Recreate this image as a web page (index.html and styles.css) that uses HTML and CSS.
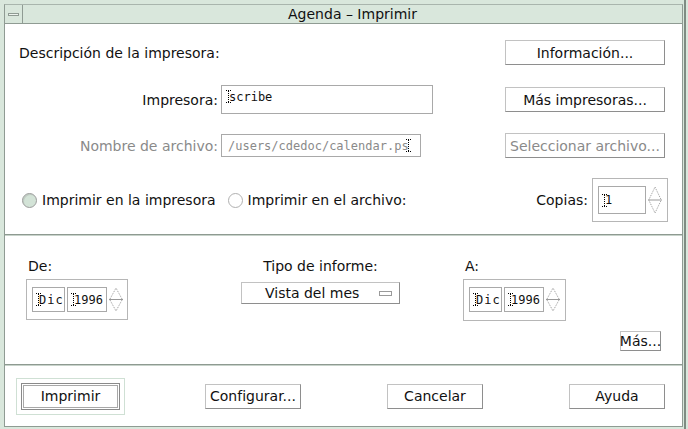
FILE: index.html
```html
<!DOCTYPE html>
<html lang="es">
<head>
<meta charset="utf-8">
<title>Agenda – Imprimir</title>
<link rel="stylesheet" href="styles.css">
</head>
<body>
<div class="window">
  <div class="titlebar">
    <div class="menu-btn"><span class="menu-dash"></span></div>
    <div class="title">Agenda – Imprimir</div>
  </div>
  <div class="client">
    <div class="sec sec-printer">
      <div class="row row-desc">
        <span class="desc">Descripción de la impresora:</span>
        <div class="btn btn-wide">Información...</div>
      </div>
      <div class="row row-printer">
        <span class="lbl">Impresora:</span>
        <div class="field field-printer"><svg class="ibeam" width="5" height="13" viewBox="0 0 5 13"><path d="M0 0.5h5M0 12.5h5M2.5 1v11" stroke="#000" stroke-dasharray="1 1" fill="none"/></svg>scribe</div>
        <div class="btn btn-wide">Más impresoras...</div>
      </div>
      <div class="row row-file">
        <span class="lbl disabled">Nombre de archivo:</span>
        <div class="field field-file disabled">/users/cdedoc/calendar.ps<svg class="ibeam ibeam-end" width="5" height="13" viewBox="0 0 5 13"><path d="M0 0.5h5M0 12.5h5M2.5 1v11" stroke="#000" stroke-dasharray="1 1" fill="none"/></svg></div>
        <div class="btn btn-wide disabled">Seleccionar archivo...</div>
      </div>
      <div class="row row-dest">
        <span class="radio on"></span><span class="radio-lbl">Imprimir en la impresora</span>
        <span class="radio second"></span><span class="radio-lbl">Imprimir en el archivo:</span>
        <span class="copias">Copias:</span>
        <div class="spin spin-copies">
          <div class="field field-copies"><svg class="ibeam" width="5" height="13" viewBox="0 0 5 13"><path d="M0 0.5h5M0 12.5h5M2.5 1v11" stroke="#000" stroke-dasharray="1 1" fill="none"/></svg>1</div>
          <svg class="arrows" width="14" height="28" viewBox="0 0 14 28"><path d="M1 13.5L7 1L13 13.5M1 14.5L7 27L13 14.5" stroke="#9a9a9a" stroke-dasharray="1 1" fill="none"/><path d="M0 14h14" stroke="#999" fill="none"/></svg>
        </div>
      </div>
    </div>

    <div class="sec sec-range">
      <div class="range-row">
        <div class="date-block">
          <div class="blk-lbl">De:</div>
          <div class="spin spin-date">
            <div class="field field-month"><svg class="ibeam" width="5" height="13" viewBox="0 0 5 13"><path d="M0 0.5h5M0 12.5h5M2.5 1v11" stroke="#000" stroke-dasharray="1 1" fill="none"/></svg>Dic</div>
            <div class="field field-year"><svg class="ibeam" width="5" height="13" viewBox="0 0 5 13"><path d="M0 0.5h5M0 12.5h5M2.5 1v11" stroke="#000" stroke-dasharray="1 1" fill="none"/></svg>1996</div>
            <svg class="arrows" width="14" height="25" viewBox="0 0 14 25"><path d="M1 12L7 1L13 12M1 13L7 24L13 13" stroke="#9a9a9a" stroke-dasharray="1 1" fill="none"/><path d="M0 12.5h14" stroke="#999" fill="none"/></svg>
          </div>
        </div>
        <div class="type-block">
          <div class="blk-lbl center">Tipo de informe:</div>
          <div class="dropdown"><span class="dd-text">Vista del mes</span><span class="dd-mark"></span></div>
        </div>
        <div class="date-block to-block">
          <div class="blk-lbl">A:</div>
          <div class="spin spin-date">
            <div class="field field-month"><svg class="ibeam" width="5" height="13" viewBox="0 0 5 13"><path d="M0 0.5h5M0 12.5h5M2.5 1v11" stroke="#000" stroke-dasharray="1 1" fill="none"/></svg>Dic</div>
            <div class="field field-year"><svg class="ibeam" width="5" height="13" viewBox="0 0 5 13"><path d="M0 0.5h5M0 12.5h5M2.5 1v11" stroke="#000" stroke-dasharray="1 1" fill="none"/></svg>1996</div>
            <svg class="arrows" width="14" height="25" viewBox="0 0 14 25"><path d="M1 12L7 1L13 12M1 13L7 24L13 13" stroke="#9a9a9a" stroke-dasharray="1 1" fill="none"/><path d="M0 12.5h14" stroke="#999" fill="none"/></svg>
          </div>
        </div>
      </div>
      <div class="more-row">
        <div class="btn btn-more">Más...</div>
      </div>
    </div>

    <div class="sec sec-actions">
      <div class="default-ring"><div class="btn btn-action btn-default">Imprimir</div></div>
      <div class="btn btn-action btn-config">Configurar...</div>
      <div class="btn btn-action btn-cancel">Cancelar</div>
      <div class="btn btn-action btn-help">Ayuda</div>
    </div>
  </div>
</div>
</body>
</html>
```

FILE: styles.css
```css
* { box-sizing: border-box; }
html, body { margin: 0; padding: 0; }
body {
  width: 688px;
  height: 429px;
  overflow: hidden;
  background: #d9e7dc;
  font-family: "DejaVu Sans", sans-serif;
  font-size: 14px;
  color: #111;
}
.window {
  width: 688px;
  height: 429px;
  padding: 4px 5px 2px 4px;
  display: flex;
  flex-direction: column;
  background: #d9e7dc;
  box-shadow: inset -2px 0 0 #d9e7dc, inset -4px 0 0 #7f8c83;
}
.titlebar {
  height: 20px;
  display: flex;
  border: 1px solid #8f9b93;
  border-top-color: #a9b5ad;
  background: #d9e7dc;
}
.menu-btn {
  width: 18px;
  border-right: 1px solid #8f9b93;
  display: flex;
  align-items: center;
  justify-content: center;
}
.menu-dash {
  width: 11px;
  height: 3px;
  border: 1px solid #8f9b93;
  background: #eef4ef;
}
.title {
  flex: 1;
  text-align: center;
  line-height: 18px;
  font-size: 14px;
}
.client {
  flex: 1;
  display: flex;
  flex-direction: column;
  background: #fff;
  border: 1px solid #8f9b93;
  border-top: none;
}
.sec { display: flex; flex-direction: column; }
.sec-printer {
  height: 211px;
  padding: 16px 17px 0 14px;
  border-bottom: 1px solid #8e9a91;
}
.sec-range {
  height: 130px;
  padding: 22px 21px 0 21px;
  border-top: 1px solid #c8d3cb;
  border-bottom: 1px solid #8e9a91;
}
.sec-actions {
  flex: 1;
  flex-direction: row;
  align-items: center;
  padding: 0 0 0 11px;
  border-top: 1px solid #c8d3cb;
}
.row { display: flex; align-items: center; }
.row-desc { height: 25px; }
.row-printer { height: 29px; margin-top: 20px; }
.row-file { height: 23px; margin-top: 20px; }
.row-dest { height: 44px; margin-top: 21px; }
.desc { white-space: nowrap; }
.lbl {
  width: 199px;
  margin-right: 3px;
  text-align: right;
  white-space: nowrap;
}
.disabled { color: #8a8a8a; }
.btn {
  display: flex;
  align-items: center;
  justify-content: center;
  background: #fff;
  border: 1px solid;
  border-color: #c2c2c2 #8e8e8e #8e8e8e #c2c2c2;
  white-space: nowrap;
  font-size: 14px;
}
.btn-wide { width: 160px; height: 25px; margin-left: auto; }
.field {
  display: flex;
  align-items: center;
  border: 1px solid #a9a9a9;
  font-family: "DejaVu Sans Mono", monospace;
  font-size: 12px;
  background: #fff;
  white-space: nowrap;
  overflow: hidden;
}
.field.disabled { color: #8a8a8a; }
.ibeam { flex: none; margin-right: -2px; }
.ibeam-end { margin-left: -3px; margin-right: 0; }
.field-printer {
  width: 212px;
  height: 29px;
  align-items: flex-start;
  padding: 4px 4px 0 4px;
}
.field-file { width: 200px; height: 23px; padding: 0 4px 0 6px; }
.radio {
  width: 15px;
  height: 15px;
  border-radius: 50%;
  border: 1px solid #b0b0b0;
  background: #fff;
  flex: none;
}
.radio.on {
  margin-left: 3px;
  background: #d3e3d7;
  border-color: #9c9c9c;
  box-shadow: inset 1px 1px 0 #c0ccc3;
}
.radio.second { margin-left: 12px; }
.radio-lbl { margin-left: 5px; white-space: nowrap; }
.copias { margin-left: auto; margin-right: 4px; }
.spin {
  display: flex;
  align-items: flex-start;
  border: 1px solid #b6b6b6;
  background: #fff;
}
.spin-copies {
  width: 76px;
  height: 44px;
  padding: 7px 0 0 5px;
  margin-right: -3px;
}
.field-copies { width: 48px; height: 28px; padding-left: 3px; }
.arrows { flex: none; margin-left: 2px; }
.range-row { display: flex; align-items: flex-start; height: 62px; }
.date-block { width: 102px; display: flex; flex-direction: column; }
.to-block { width: 103px; margin-left: 63px; }
.blk-lbl { height: 16px; line-height: 16px; margin-left: 2px; white-space: nowrap; }
.blk-lbl.center { text-align: center; margin-left: 0; }
.spin-date {
  height: 41px;
  margin-top: 5px;
  padding: 7px 0 0 5px;
}
.to-block .spin-date { height: 42px; }
.field-month { width: 33px; height: 25px; padding-left: 3px; letter-spacing: 1px; }
.field-year { width: 40px; height: 25px; margin-left: 2px; padding-left: 3px; }
.type-block { width: 159px; margin-left: 113px; display: flex; flex-direction: column; }
.dropdown {
  height: 22px;
  margin-top: 8px;
  display: flex;
  align-items: center;
  border: 1px solid;
  border-color: #c2c2c2 #8e8e8e #8e8e8e #c2c2c2;
  padding: 0 7px 0 23px;
}
.dd-text { flex: 1; white-space: nowrap; }
.dd-mark {
  width: 13px;
  height: 5px;
  border: 1px solid #9a9a9a;
  background: #fff;
}
.more-row { display: flex; justify-content: flex-end; margin-top: 11px; }
.btn-more { width: 41px; height: 20px; }
.btn-action { width: 96px; height: 25px; }
.btn-config { margin-left: 80px; }
.btn-cancel { margin-left: 86px; }
.btn-help { margin-left: 86px; }
.default-ring {
  width: 109px;
  height: 37px;
  padding: 4px;
  border: 1px solid #cfe0d4;
  display: flex;
  align-items: center;
  justify-content: center;
}
.btn-default {
  width: 99px;
  height: 27px;
  border: 1px solid #8a8a8a;
  box-shadow: inset 0 0 0 1px #fff, inset 0 0 0 2px #a8a8a8;
}
```
